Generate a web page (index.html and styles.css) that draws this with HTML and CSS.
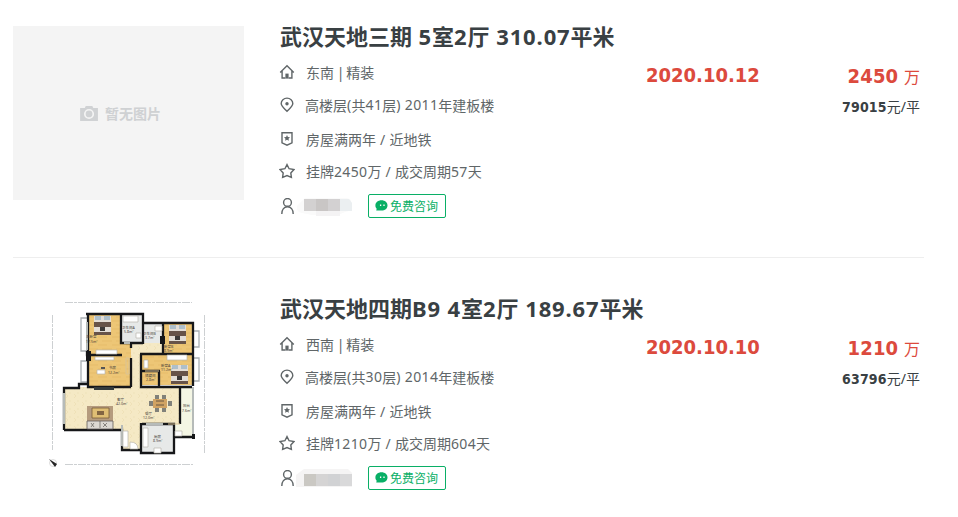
FILE: index.html
```
<!DOCTYPE html>
<html lang="zh-CN">
<head>
<meta charset="utf-8">
<title>武汉天地成交</title>
<link rel="stylesheet" href="styles.css">
</head>
<body>
<svg class="defs" width="0" height="0" aria-hidden="true">
  <symbol id="house" viewBox="0 0 16 16"><path d="M1.2 8.4 8 1.8l6.8 6.6M3.1 7v7h3.3M12.9 7v7H9.6"/><path class="solid" d="M6.4 9.6h3.2V14.6H6.4z"/></symbol>
  <symbol id="pin" viewBox="0 0 16 16"><path d="M8 14.3C5.4 11.5 2.2 9.2 2.2 6.4a5.8 5.3 0 0 1 11.6 0C13.8 9.2 10.6 11.5 8 14.3z"/><circle class="solid" cx="8" cy="6.8" r="1.7"/></symbol>
  <symbol id="badge" viewBox="0 0 16 16"><path d="M3 1.7h10v10.2L8 14.2l-5-2.3z"/><path class="solid" d="m8 4 .9 1.9 2.1.3-1.5 1.5.4 2.1L8 8.8 6.1 9.8l.4-2.1L5 6.2l2.1-.3z"/></symbol>
  <symbol id="star" viewBox="0 0 16 16"><path d="m8 1.6 2.1 4.1 4.9.8-3.2 3.4.6 4.5L8 12.5l-4.4 1.9.6-4.5L1 6.5l4.9-.8z"/></symbol>
  <symbol id="person" viewBox="0 0 16 16"><circle cx="8.5" cy="4.4" r="3.9"/><path d="M2.8 16c0-4.5 2.4-7.2 5.7-7.2s5.700 2.700 5.700 7.200"/></symbol>
  <symbol id="chat" viewBox="0 0 13 12"><path d="M6.5.3C10 .3 12.500 2.400 12.500 5.400S10 10.500 6.500 10.500H1.200l.5-1.800C.8 7.800.4 6.700.4 5.400.4 2.400 3 .3 6.500.3z" fill="#09af66"/><path d="M5.600 4.400v1.600M9 4.400v1.600" stroke="#fff" stroke-width="1.300"/></symbol>
</svg>
<main class="list">
  <article class="item">
    <div class="thumb empty">
      <svg class="camera" viewBox="0 0 20 16"><path d="M1 2h4l1-2h7l1 2h5v14H0V2z" fill="#d0d2d4"/><circle cx="9.500" cy="8.500" r="4.500" fill="none" stroke="#f4f4f4" stroke-width="1.800"/></svg>
      <span>暂无图片</span>
    </div>
    <div class="info">
      <h2>武汉天地三期<b> 5</b>室<b>2</b>厅<b> 310.07</b>平米</h2>
      <p class="r1"><svg class="icon"><use href="#house"/></svg>东南<i> | </i>精装</p>
      <p class="r2"><svg class="icon"><use href="#pin"/></svg>高楼层<b>(</b>共<b>41</b>层<b>) 2011</b>年建板楼</p>
      <p class="r3"><svg class="icon"><use href="#badge"/></svg>房屋满两年<b> / </b>近地铁</p>
      <p class="r4"><svg class="icon"><use href="#star"/></svg>挂牌<b>2450</b>万<b> / </b>成交周期<b>57</b>天</p>
      <div class="agent"><svg class="icon"><use href="#person"/></svg>
        <svg class="mask" viewBox="0 0 58 24"><path d="M9 4h42q5 1 5 7t-7 7l-9 4-24-1-10-2Q0 18 1 12z" fill="#fafafa"/><path d="M8 5h12v12H8z" fill="#d3d1d1"/><path d="M20 5h12v12H20z" fill="#c9c6c5"/><path d="M32 5h12v12H32z" fill="#d3d1d2"/><path d="M44 5h9l3 4v8H44z" fill="#ebeff1"/><path d="M20 17h24v5H20z" fill="#f4f3f4"/></svg>
        <a class="ask"><svg><use href="#chat"/></svg>免费咨询</a></div>
    </div>
    <div class="date">2020.10.12</div>
    <div class="money"><div class="total"><strong>2450</strong> 万</div><div class="unit"><strong>79015</strong>元/平</div></div>
  </article>
  <article class="item">
    <div class="thumb">
      <svg class="plan" viewBox="13 298 231 174">
        <defs>
          <pattern id="wood" width="14" height="8" patternUnits="userSpaceOnUse"><path d="M0 0h14v8H0z" fill="#edc676"/><path d="M0 1h9M4 5h10" stroke="#e4b863" stroke-width=".7"/></pattern>
          <pattern id="tile" width="8" height="8" patternUnits="userSpaceOnUse"><path d="M0 0h8v8H0z" fill="#f5e9c5"/><path d="m2 2 2 2-2 2M6 0v2" fill="none" stroke="#eddeb3" stroke-width=".7"/></pattern>
          <g id="bed"><path d="M0 0h17v19H0z" fill="#e3ddd6"/><path d="M1 0h6v4H1zM10 0h6v4h-6z" fill="#aebfca"/><path d="M0 6h17v5H0zM0 16h17v3H0z" fill="#675349"/><path d="M6 11h5v4H6z" fill="#3d3938"/></g>
        </defs>
        <g fill="none" stroke="#cdd0d2" stroke-width="1" stroke-dasharray="8 1 3 1"><path d="M65 302.500H192M65 464.500H193M52.500 315V450M204.500 315V454"/></g>
        <g fill="#fff" stroke="#aab0b4" stroke-width="1.300"><path d="M81 318h7v33h-7zM81 361h7v21h-7zM191 331h8v16h-8zM191 358h8v23h-8z"/></g>
        <path d="M87 314h34v29h10v45H87z" fill="url(#wood)"/>
        <path d="M63 387h117v37h-39v25h-20v-19H63zM131 343h32v11h-22v34h-10z" fill="url(#tile)"/>
        <path d="M121 314h21v29h-21zM143 323h20v20h-20zM142 424h31v29h-31z" fill="#e7e9e8"/>
        <path d="M163 323h29v62h-52v-31h23z" fill="url(#wood)"/>
        <path d="M180 387h13v50h-20v-13h7z" fill="#f4f6e4"/>
        <g fill="none" stroke="#161719" stroke-width="2.300" stroke-linejoin="miter">
          <path d="M88 351V314h33v29h22M86 314h57v9h50v63M143 315v29M163 323v31M87 351v4h35M88 356v31h43M131 343v5M131 358v29M64 430V388h15v-4h9M140 354h53M141 354v33h51M159 371v15M160 371h-18M64 430h58v20h18M142 424h32v29h-33v-30M180 386v38M174 437h20"/>
        </g>
        <path d="M87 322v28M64 393v31M193 387v47M122 425v21M146 424h17M124 343h6" fill="none" stroke="#b6bbb9" stroke-width="2"/>
        <path d="M86 351h5v10h-5zM160 336h5v8h-5zM192 434h3v5h-3z" fill="#161719"/>
        <path d="M126 358h3v16h-3zM145 371h14M180 424h-12" fill="none" stroke="#d9c396"/>
        <use href="#bed" x="94" y="316"/><use href="#bed" x="169" y="325"/><use href="#bed" x="171" y="365"/>
        <g fill="#fff" stroke="#b8b5ae" stroke-width=".7"><path d="M96 350h21v4H96zM95 357h19v3H95zM97 370h8v4h-8zM167 355h20v5h-20zM123 316h15v6h-15zM136 333h5v5h-5zM155 326h7v5h-7zM144 360h4v8h-4zM143 428h5v19h-5zM123 431h5v16h-5zM175 431h7v5h-7zM154 448h7v5h-7zM130 442q8 0 8 7h-8z"/></g>
        <path d="M101 367h4v2h-4z" fill="#555"/><path d="M94 387h20v3H94z" fill="#343b3c"/>
        <path d="M87 406h26v16H87z" fill="#b59b7e"/><path d="M92 408h17v10H92z" fill="#dfbe74" stroke="#775b38" stroke-width=".8"/><path d="M97 411h7v4h-7z" fill="#826542"/><path d="M87 421h26v8H87z" fill="#dcd8d2" stroke="#625e5a" stroke-width=".8"/><path d="m91 423 3 4m-3 0 3-4m9 0 4 4m0-4-4 4M100 421v7" stroke="#625e5a" stroke-width=".7"/>
        <path d="M153 399h14v9h-14z" fill="#d1a363"/><path d="M155 395h4v4h-4zM162 395h4v4h-4zM155 408h4v4h-4zM162 408h4v4h-4zM149 401h4v5h-4zM168 401h4v5h-4z" fill="#81817a"/><path d="M156 401h8m-8 4h8" stroke="#685742"/>
        <g class="labels"><text x="86" y="338">主卧室</text><text x="86" y="343">17.5m²</text><text x="109" y="369">书房</text><text x="108" y="374">12.2m²</text><text x="122" y="329">卫生间A</text><text x="124" y="333">5.8m²</text><text x="143" y="335">卫生间B</text><text x="145" y="339">3.7m²</text><text x="164" y="348">卧室B</text><text x="164" y="352">8.9m²</text><text x="161" y="367">卧室A</text><text x="161" y="371">11.2m²</text><text x="145" y="377">储藏间</text><text x="146" y="381">2.8m²</text><text x="117" y="401">客厅</text><text x="116" y="405">42.0m²</text><text x="145" y="415">餐厅</text><text x="143" y="419">12.0m²</text><text x="183" y="407">阳台</text><text x="182" y="412">7.6m²</text><text x="154" y="438">厨房</text><text x="153" y="442">8.9m²</text></g>
        <circle cx="53" cy="463" r="3.500" fill="none" stroke="#ddd"/><path d="m49 459 8 5-2 3z" fill="#252525"/>
      </svg>
    </div>
    <div class="info">
      <h2>武汉天地四期<b>B9 4</b>室<b>2</b>厅<b> 189.67</b>平米</h2>
      <p class="r1"><svg class="icon"><use href="#house"/></svg>西南<i> | </i>精装</p>
      <p class="r2"><svg class="icon"><use href="#pin"/></svg>高楼层<b>(</b>共<b>30</b>层<b>) 2014</b>年建板楼</p>
      <p class="r3"><svg class="icon"><use href="#badge"/></svg>房屋满两年<b> / </b>近地铁</p>
      <p class="r4"><svg class="icon"><use href="#star"/></svg>挂牌<b>1210</b>万<b> / </b>成交周期<b>604</b>天</p>
      <div class="agent"><svg class="icon"><use href="#person"/></svg>
        <svg class="mask" viewBox="0 0 58 24"><path d="M8 3h44l4 4v14H0V9z" fill="#f5f4f4"/><path d="M8 8h12v12H8z" fill="#cac8c3"/><path d="M20 8h12v12H20z" fill="#d5d4d4"/><path d="M32 8h12v12H32z" fill="#d1d2d4"/><path d="M44 8h12v12H44z" fill="#d9d9da"/></svg>
        <a class="ask"><svg><use href="#chat"/></svg>免费咨询</a></div>
    </div>
    <div class="date">2020.10.10</div>
    <div class="money"><div class="total"><strong>1210</strong> 万</div><div class="unit"><strong>63796</strong>元/平</div></div>
  </article>
</main>
</body>
</html>
```
FILE: styles.css
```
* { box-sizing: border-box; }
body {
  margin: 0;
  background: #fff;
  color: #606668;
  font: 14px "Noto Sans", "Noto Sans CJK SC", sans-serif;
  overflow: hidden;
}
.defs { display: block; }
.list { width: 911px; margin-left: 13px; }
.item {
  display: grid;
  grid-template-columns: 231px 366px 150px 1fr;
  height: 258px;
  padding-top: 26px;
  border-bottom: 1px solid #eee;
}
.item + .item { height: 259px; padding-top: 40px; border: 0; }
.thumb { width: 231px; height: 174px; }
.empty {
  display: flex;
  align-items: center;
  justify-content: center;
  gap: 6px;
  padding-right: 16px;
  background: #f4f4f4;
  color: #cfd1d3;
  font-weight: 700;
}
.camera { width: 19px; height: 15px; }
.plan { display: block; width: 231px; height: 174px; }
.labels { fill: #4a443c; font-size: 3.5px; }
.info { margin-top: -1px; padding-left: 36px; white-space: nowrap; }
h2 {
  height: 24px;
  margin: -1px 0 8px;
  color: #394043;
  font-size: 22px;
  line-height: 24px;
}
h2 b { font-weight: 700; letter-spacing: .88px; }
p, .agent { display: flex; align-items: center; margin: 0; white-space: pre; }
p b { font-weight: 400; letter-spacing: .35px; }
p i { font-style: normal; letter-spacing: -.9px; }
.r1 { height: 32px; }
.r2 { height: 33px; }
.r3 { height: 36px; }
.r4 { height: 28px; }
.agent { height: 41px; white-space: normal; }
.icon {
  flex: none;
  width: 16px;
  height: 16px;
  margin: 0 11px 0 -1px;
  fill: none;
  stroke: #606668;
  stroke-width: 1.4;
}
.r2 .icon { margin-right: 10px; }
.solid { fill: #606668; stroke: none; }
.agent .icon { margin-right: 1px; }
.mask { width: 58px; height: 24px; }
.ask {
  display: flex;
  align-items: center;
  width: 78px;
  height: 24px;
  margin-left: 14px;
  padding-left: 6px;
  border: 1px solid #09af66;
  border-radius: 2px;
  color: #09af66;
  font-size: 12px;
}
.ask svg { width: 13px; height: 12px; margin-right: 2px; }
.date {
  padding: 37px 0 0 36px;
  color: #dc4a3d;
  font: bold 20px/24px "DejaVu Sans Condensed", "DejaVu Sans", sans-serif;
  font-stretch: condensed;
}
.money { padding: 36px 4px 0 0; text-align: right; white-space: nowrap; }
.total { height: 28px; color: #dc4a3d; font-size: 16px; line-height: 28px; word-spacing: 1.5px; }
.unit { height: 34px; color: #394043; line-height: 34px; }
strong { font-family: "DejaVu Sans Condensed", "DejaVu Sans", sans-serif; font-stretch: condensed; letter-spacing: .2px; }
.total strong { font-size: 20px; }
```
